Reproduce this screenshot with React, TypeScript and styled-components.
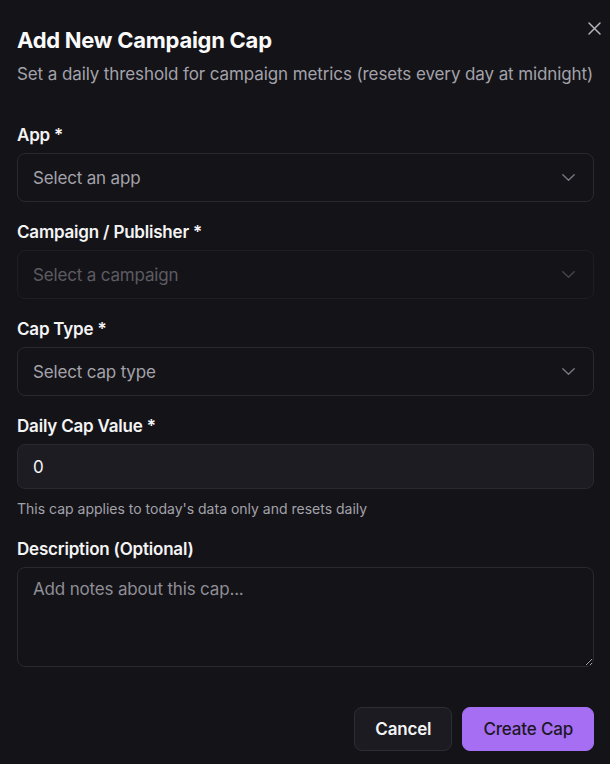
import React from "react";
import styled, { createGlobalStyle } from "styled-components";

const Global = createGlobalStyle`
  html, body { margin: 0; padding: 0; background: #141318; }
  body { font-family: Inter, "Noto Sans", sans-serif; color: #f4f4f5; -webkit-font-smoothing: antialiased; }
  * { box-sizing: border-box; }
`;

const Dialog = styled.div`
  position: relative;
  width: 610px;
  min-height: 764px;
  background: #141318;
  padding: 26px 16px 0 17px;
`;

const CloseButton = styled.button`
  position: absolute;
  top: 20px;
  right: 8px;
  width: 16px;
  height: 16px;
  padding: 0;
  border: 0;
  background: transparent;
  color: #b4b3ba;
  display: flex;
  align-items: center;
  justify-content: center;
`;

const Title = styled.h2`
  margin: 0;
  font-size: 22px;
  line-height: 28px;
  font-weight: 700;
  letter-spacing: -0.012em;
  color: #fafafa;
`;

const Subtitle = styled.p`
  margin: 8px 0 0;
  font-size: 17px;
  line-height: 24px;
  letter-spacing: -0.006em;
  color: #a3a2aa;
`;

const Form = styled.div`
  margin-top: 39px;
  display: flex;
  flex-direction: column;
  gap: 20px;
`;

const Field = styled.div`
  display: flex;
  flex-direction: column;
`;

const Label = styled.label`
  font-size: 17px;
  line-height: 20px;
  font-weight: 600;
  letter-spacing: -0.012em;
  color: #f4f4f5;
  margin-bottom: 8px;
`;

const SelectBox = styled.div<{ $disabled?: boolean }>`
  height: 49px;
  border: 1px solid #2a2930;
  border-radius: 8px;
  background: transparent;
  display: flex;
  align-items: center;
  justify-content: space-between;
  padding: 0 18px 0 15px;
  opacity: ${(p) => (p.$disabled ? 0.5 : 1)};
`;

const Placeholder = styled.span`
  font-size: 17px;
  letter-spacing: -0.01em;
  color: #a3a2aa;
`;

const Chevron = styled.svg`
  width: 13px;
  height: 7px;
  color: #7b7a81;
`;

const NumberInput = styled.input`
  height: 45px;
  border: 1px solid #2a2930;
  border-radius: 8px;
  background: #1d1c22;
  color: #f4f4f5;
  font-family: inherit;
  font-size: 17px;
  padding: 0 15px;
  outline: none;
`;

const Helper = styled.p`
  margin: 10px 0 0;
  font-size: 14px;
  line-height: 20px;
  letter-spacing: 0;
  color: #a3a2aa;
`;

const TextArea = styled.textarea`
  height: 100px;
  border: 1px solid #2a2930;
  border-radius: 8px;
  background: transparent;
  color: #f4f4f5;
  font-family: inherit;
  font-size: 17px;
  letter-spacing: -0.01em;
  padding: 11px 15px;
  outline: none;
  resize: vertical;
  color-scheme: dark;
  &::placeholder { color: #8f8e96; }
`;

const Footer = styled.div`
  margin-top: 40px;
  display: flex;
  justify-content: flex-end;
  gap: 10px;
`;

const Button = styled.button<{ $primary?: boolean }>`
  height: 44px;
  border-radius: 8px;
  font-family: inherit;
  font-size: 17px;
  letter-spacing: -0.01em;
  padding: 0 20px;
  font-weight: ${(p) => (p.$primary ? 500 : 600)};
  border: 1px solid ${(p) => (p.$primary ? "#a66ef2" : "#2e2d34")};
  background: ${(p) => (p.$primary ? "#a66ef2" : "#1c1b21")};
  color: ${(p) => (p.$primary ? "#1d1726" : "#f4f4f5")};
`;

const ChevronIcon = () => (
  <Chevron viewBox="0 0 13 7" fill="none" stroke="currentColor" strokeWidth="1.3" strokeLinecap="round" strokeLinejoin="round">
    <path d="M0.8 0.8l5.7 5.5 5.7-5.5" />
  </Chevron>
);

const Select = ({ label, placeholder, disabled }: { label: string; placeholder: string; disabled?: boolean }) => (
  <Field>
    <Label>{label}</Label>
    <SelectBox $disabled={disabled}>
      <Placeholder>{placeholder}</Placeholder>
      <ChevronIcon />
    </SelectBox>
  </Field>
);

export default function App() {
  return (
    <>
      <Global />
      <Dialog>
        <CloseButton aria-label="Close">
          <svg width="13" height="13" viewBox="0 0 13 13" fill="none" stroke="currentColor" strokeWidth="1.5" strokeLinecap="round">
            <path d="M1 1l11 11M12 1L1 12" />
          </svg>
        </CloseButton>
        <Title>Add New Campaign Cap</Title>
        <Subtitle>Set a daily threshold for campaign metrics (resets every day at midnight)</Subtitle>
        <Form>
          <Select label="App *" placeholder="Select an app" />
          <Select label="Campaign / Publisher *" placeholder="Select a campaign" disabled />
          <Select label="Cap Type *" placeholder="Select cap type" />
          <Field>
            <Label>Daily Cap Value *</Label>
            <NumberInput type="number" defaultValue={0} />
            <Helper>This cap applies to today's data only and resets daily</Helper>
          </Field>
          <Field>
            <Label>Description (Optional)</Label>
            <TextArea placeholder="Add notes about this cap..." />
          </Field>
        </Form>
        <Footer>
          <Button>Cancel</Button>
          <Button $primary>Create Cap</Button>
        </Footer>
      </Dialog>
    </>
  );
}
